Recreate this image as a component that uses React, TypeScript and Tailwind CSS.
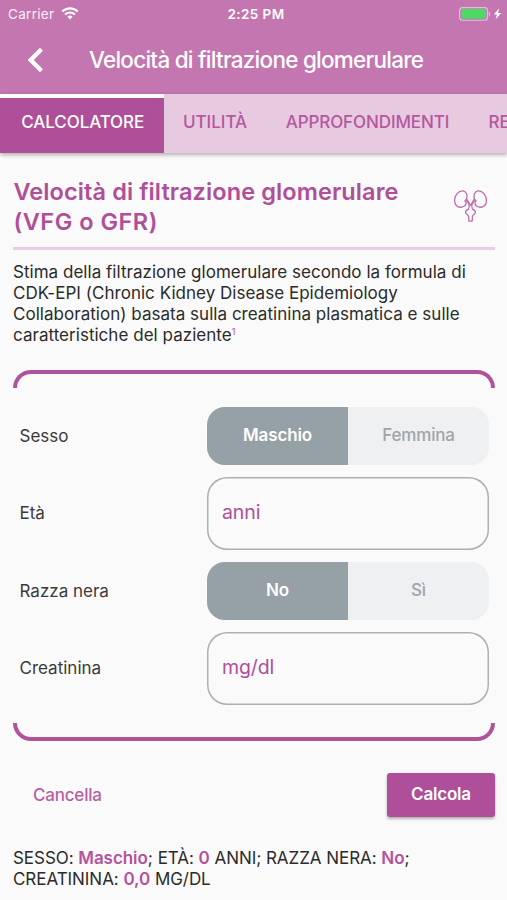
import { useState } from 'react';
import clsx from 'clsx';

const TABS = [
  { label: 'CALCOLATORE', className: 'w-[163.5px] pl-[8px] tracking-[-0.1px]' },
  { label: 'UTILITÀ', className: 'w-[103px]' },
  { label: 'APPROFONDIMENTI', className: 'w-[202px] tracking-[-0.1px]' },
  { label: 'REFERENZE', className: 'pl-5' },
];

type ToggleProps = {
  options: string[];
  value: string;
  onChange: (value: string) => void;
};

const Toggle = ({ options, value, onChange }: ToggleProps) => (
  <div className="flex h-[58.5px] w-[282px] overflow-hidden rounded-[18px] bg-[#eef0f1]">
    {options.map((option) => (
      <button
        key={option}
        onClick={() => onChange(option)}
        className={clsx(
          'flex-1 pb-px text-[17px] tracking-[-0.15px]',
          option === value ? 'bg-[#95a0a7] font-semibold text-white' : 'font-medium text-[#9da5aa]'
        )}
      >
        {option}
      </button>
    ))}
  </div>
);

type FieldProps = {
  label: string;
  children: React.ReactNode;
};

const Field = ({ label, children }: FieldProps) => (
  <div className="flex items-center justify-between">
    <span className="pt-px text-[17px] text-[#3a3a3c]">{label}</span>
    {children}
  </div>
);

const inputClass =
  'h-[72.5px] w-[282px] rounded-[20px] bg-transparent px-[15px] pb-[2px] text-[19.5px] tracking-[-0.1px] text-[#af4e99] shadow-[inset_0_0_0_1.5px_#adb0b1] outline-none placeholder:text-[#af4e99] placeholder:opacity-100';

const WifiIcon = () => (
  <svg width="18" height="13" viewBox="0 0 18 13" fill="none" stroke="white">
    <path d="M1.2 4.6a11 11 0 0 1 15.6 0" strokeWidth="2.1" />
    <path d="M4.1 7.5a7 7 0 0 1 9.8 0" strokeWidth="2.1" />
    <path d="M9 12.4 6.4 9.8a3.7 3.7 0 0 1 5.2 0z" fill="white" stroke="none" />
  </svg>
);

const BatteryIcon = () => (
  <svg width="44" height="14" viewBox="0 0 44 14">
    <rect x="0.6" y="0.6" width="28" height="12.6" rx="3" fill="none" stroke="#e3bfdb" strokeWidth="1.1" />
    <rect x="2.1" y="2.1" width="25" height="9.6" rx="1.6" fill="#4cd964" />
    <path d="M30.1 4.7c1.5.5 1.5 4.1 0 4.6z" fill="#e3bfdb" />
    <path d="m40.3 1.2-5.5 6.3h3.1l-1.4 5 5.7-6.4h-3.2z" fill="white" />
  </svg>
);

const KidneysIcon = () => (
  <svg width="35" height="34" viewBox="0 0 36 34" fill="none" stroke="#bd6cac" strokeWidth="1.35" strokeLinejoin="round" strokeLinecap="round">
    <path d="M13.8 10.2c1.2-3.5.7-8-3.4-8.7C5.6 1 1.6 6.3 1.6 11.3c0 4.4 2.8 7.2 6.5 7 3.3-.2 5.7-2.2 5.3-4.7-.2-1-1.3-1-1-2 .1-.7.9-1 1.4-1.4z" />
    <path d="M22.2 10.2c-1.2-3.5-.7-8 3.4-8.7 4.8-.5 8.8 4.8 8.8 9.8 0 4.4-2.8 7.2-6.5 7-3.3-.2-5.7-2.2-5.3-4.7.2-1 1.3-1 1-2-.1-.7-.9-1-1.4-1.4z" />
    <path d="M13.9 11c.3 2 2.3 2.8 2.7 5.2.3 1.7-.2 3.2-.9 4.3-1.3.4-2.7 1.2-2.7 2.9 0 2.4 2.9 2.4 3 4.5l.3 4.6h3.4l.3-4.6c.1-2.1 3-2.1 3-4.5 0-1.7-1.4-2.5-2.7-2.9-.7-1.1-1.2-2.6-.9-4.3.4-2.4 2.4-3.2 2.7-5.2" />
    <path d="m14.6 10.6 3.4 5.9 3.4-5.9" />
  </svg>
);

const App = () => {
  const [activeTab, setActiveTab] = useState('CALCOLATORE');
  const [sex, setSex] = useState('Maschio');
  const [black, setBlack] = useState('No');
  const [age, setAge] = useState('');
  const [creatinine, setCreatinine] = useState('');

  const reset = () => {
    setSex('Maschio');
    setBlack('No');
    setAge('');
    setCreatinine('');
  };

  return (
    <div className="h-[900px] w-[507px] overflow-hidden bg-[#fafafa] font-['Inter',sans-serif]">
      <header className="bg-[#c376b0] text-white">
        <div className="grid h-[27px] grid-cols-3 items-center pr-[4px] pl-[8px] text-[13.5px]">
          <div className="flex items-center gap-[7px] text-[#fbeff8]">
            <span className="pt-px tracking-[0.3px]">Carrier</span>
            <WifiIcon />
          </div>
          <span className="pt-px pl-px text-center font-semibold tracking-[0.4px]">2:25 PM</span>
          <div className="flex justify-end">
            <BatteryIcon />
          </div>
        </div>
        <div className="flex h-[67px] items-center pb-px pl-[27px]">
          <button className="w-[62px]" aria-label="Indietro">
            <svg width="17" height="26" viewBox="0 0 17 26" fill="none" stroke="white" strokeWidth="4.3">
              <path d="M14.5 2.3 3.7 13l10.8 10.7" />
            </svg>
          </button>
          <h1 className="text-[22.5px] font-medium tracking-[-0.75px] whitespace-nowrap">Velocità di filtrazione glomerulare</h1>
        </div>
      </header>

      <nav className="relative flex h-[58.5px] bg-[#e7c9e0] shadow-[0_2px_4px_rgba(0,0,0,0.3)]">
        {TABS.map((tab) => (
          <button
            key={tab.label}
            onClick={() => setActiveTab(tab.label)}
            className={clsx(
              'shrink-0 border-t-4 pb-[5px] text-[17px] font-medium whitespace-nowrap',
              tab.className,
              tab.label === activeTab ? 'border-white bg-[#af4e99] pr-[6px] text-white' : 'border-transparent text-[#b4579f]'
            )}
          >
            {tab.label}
          </button>
        ))}
      </nav>

      <main className="pr-[12px] pl-[13px]">
        <div className="flex h-[97.5px] items-start justify-between border-b-[3px] border-[#eacde3] pt-[24.5px] pr-[7px]">
          <h2 className="pl-[0.5px] text-[23.5px] leading-[29.5px] font-semibold whitespace-nowrap text-[#af4e99]">
            <span className="tracking-[0.1px]">Velocità di filtrazione glomerulare</span>
            <br />
            <span className="tracking-[0.5px]">(VFG o GFR)</span>
          </h2>
          <div className="mt-[12px] shrink-0">
            <KidneysIcon />
          </div>
        </div>

        <p className="mt-[12px] text-[17px] leading-[21px] tracking-[0.03px] whitespace-nowrap text-[#2b2b2b]">
          Stima della filtrazione glomerulare secondo la formula di
          <br />
          CDK-EPI (Chronic Kidney Disease Epidemiology
          <br />
          Collaboration) basata sulla creatinina plasmatica e sulle
          <br />
          caratteristiche del paziente
          <sup className="-top-[0.7em] text-[9px] text-[#af4e99]">1</sup>
        </p>

        <div className="mt-[24px] h-[18px] rounded-t-[18px] border-x-4 border-t-4 border-[#b1539c]" />
        <div className="flex flex-col gap-3 pt-[18.5px] pr-[6px] pb-[18px] pl-[6.5px]">
          <Field label="Sesso">
            <Toggle options={['Maschio', 'Femmina']} value={sex} onChange={setSex} />
          </Field>
          <Field label="Età">
            <input className={inputClass} placeholder="anni" value={age} onChange={(e) => setAge(e.target.value)} />
          </Field>
          <Field label="Razza nera">
            <Toggle options={['No', 'Sì']} value={black} onChange={setBlack} />
          </Field>
          <Field label="Creatinina">
            <input className={inputClass} placeholder="mg/dl" value={creatinine} onChange={(e) => setCreatinine(e.target.value)} />
          </Field>
        </div>
        <div className="h-[18px] rounded-b-[18px] border-x-4 border-b-4 border-[#b1539c]" />

        <div className="mt-[32px] flex items-center justify-between pl-[20px]">
          <button onClick={reset} className="pt-[2px] text-[17px] font-medium tracking-[-0.2px] text-[#b85fa5]">Cancella</button>
          <button className="h-[44px] w-[108px] rounded-[3px] bg-[#af4e99] text-[17px] font-semibold tracking-[-0.2px] text-white shadow-[0_2px_3px_rgba(0,0,0,0.3)]">
            Calcola
          </button>
        </div>

        <p className="mt-[31.5px] text-[17px] leading-[21px] tracking-[-0.05px] whitespace-nowrap text-[#2b2b2b]">
          SESSO: <b className="font-semibold text-[#b4529e]">{sex}</b>; ETÀ: <b className="font-semibold text-[#b4529e]">{age || '0'}</b> ANNI; RAZZA NERA: <b className="font-semibold text-[#b4529e]">{black}</b>;
          <br />
          CREATININA: <b className="font-semibold text-[#b4529e]">{creatinine || '0,0'}</b> MG/DL
        </p>
      </main>
    </div>
  );
};

export default App;
